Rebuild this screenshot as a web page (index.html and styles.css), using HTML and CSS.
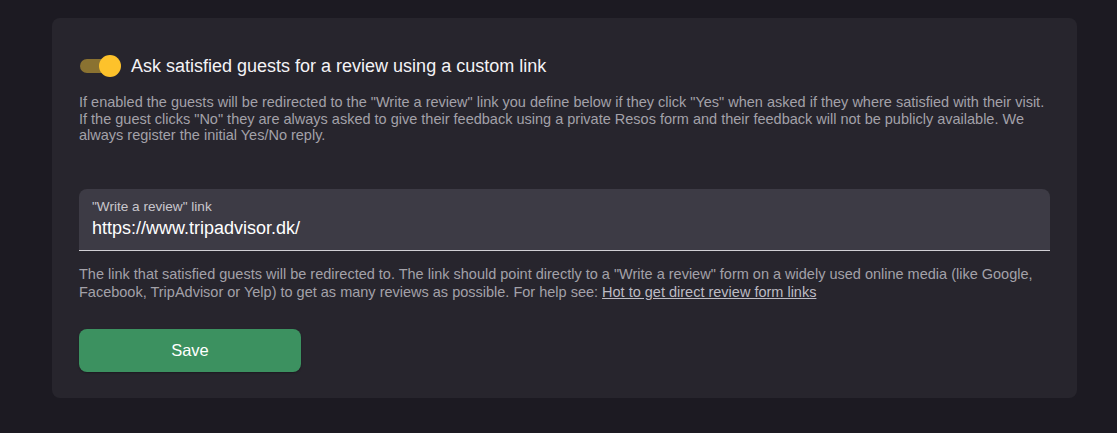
FILE: index.html
```html
<!DOCTYPE html>
<html>
<head>
<meta charset="utf-8">
<link rel="stylesheet" href="styles.css">
</head>
<body>
<div class="card">
  <div class="toggle-row">
    <span class="switch"><span class="track"></span><span class="knob"></span></span>
    <span class="title">Ask satisfied guests for a review using a custom link</span>
  </div>
  <p class="desc">If enabled the guests will be redirected to the "Write a review" link you define below if they click "Yes" when asked if they where satisfied with their visit. If the guest clicks "No" they are always asked to give their feedback using a private Resos form and their feedback will not be publicly available. We always register the initial Yes/No reply.</p>
  <div class="field">
    <div class="label">"Write a review" link</div>
    <div class="value">https://www.tripadvisor.dk/</div>
  </div>
  <p class="helper">The link that satisfied guests will be redirected to. The link should point directly to a "Write a review" form on a widely used online media (like Google, Facebook, TripAdvisor or Yelp) to get as many reviews as possible. For help see: <a class="help-link" href="#">Hot to get direct review form links</a></p>
  <button class="save">Save</button>
</div>
</body>
</html>
```
FILE: styles.css
```css
html, body {
  margin: 0;
  padding: 0;
  background: #1c1a22;
  font-family: "Liberation Sans", Arial, sans-serif;
}
body {
  padding: 18px 40px 0 52px;
}
.card {
  width: 971px;
  height: 344px;
  background: #27252d;
  border-radius: 8px;
  padding: 36px 27px 0 27px;
}
.toggle-row {
  display: flex;
  align-items: center;
  height: 24px;
}
.switch {
  position: relative;
  width: 42px;
  height: 24px;
  flex: none;
}
.track {
  position: absolute;
  left: 1px;
  top: 5px;
  width: 34px;
  height: 14px;
  border-radius: 7px;
  background: #8a7231;
}
.knob {
  position: absolute;
  left: 20px;
  top: 1px;
  width: 22px;
  height: 22px;
  border-radius: 50%;
  background: #fdc22b;
}
.title {
  margin-left: 10px;
  color: #f4f3f6;
  font-size: 18px;
}
.desc {
  margin: 16px 0 0 0;
  color: #a3a1a9;
  font-size: 14.5px;
  line-height: 16.5px;
}
.field {
  margin-top: 45px;
  height: 62px;
  background: #3d3b45;
  border-radius: 8px 8px 0 0;
  border-bottom: 1px solid #d0cfd4;
  box-sizing: border-box;
  padding: 10px 13px 0 13px;
}
.label {
  color: #c9c7cd;
  font-size: 13.6px;
  line-height: 16px;
}
.value {
  margin-top: 2px;
  color: #ffffff;
  font-size: 18px;
  line-height: 22px;
}
.helper {
  margin: 14px 0 0 0;
  color: #a3a1a9;
  font-size: 14.5px;
  line-height: 18.5px;
}
.help-link {
  color: #bdbbc3;
  text-decoration: underline;
}
.save {
  display: block;
  margin-top: 27px;
  width: 222px;
  height: 43px;
  border: none;
  border-radius: 8px;
  background: #3c9160;
  color: #ffffff;
  font-family: "Liberation Sans", Arial, sans-serif;
  font-size: 16.5px;
  box-shadow: 0 1px 2px rgba(0,0,0,0.3);
}
```
